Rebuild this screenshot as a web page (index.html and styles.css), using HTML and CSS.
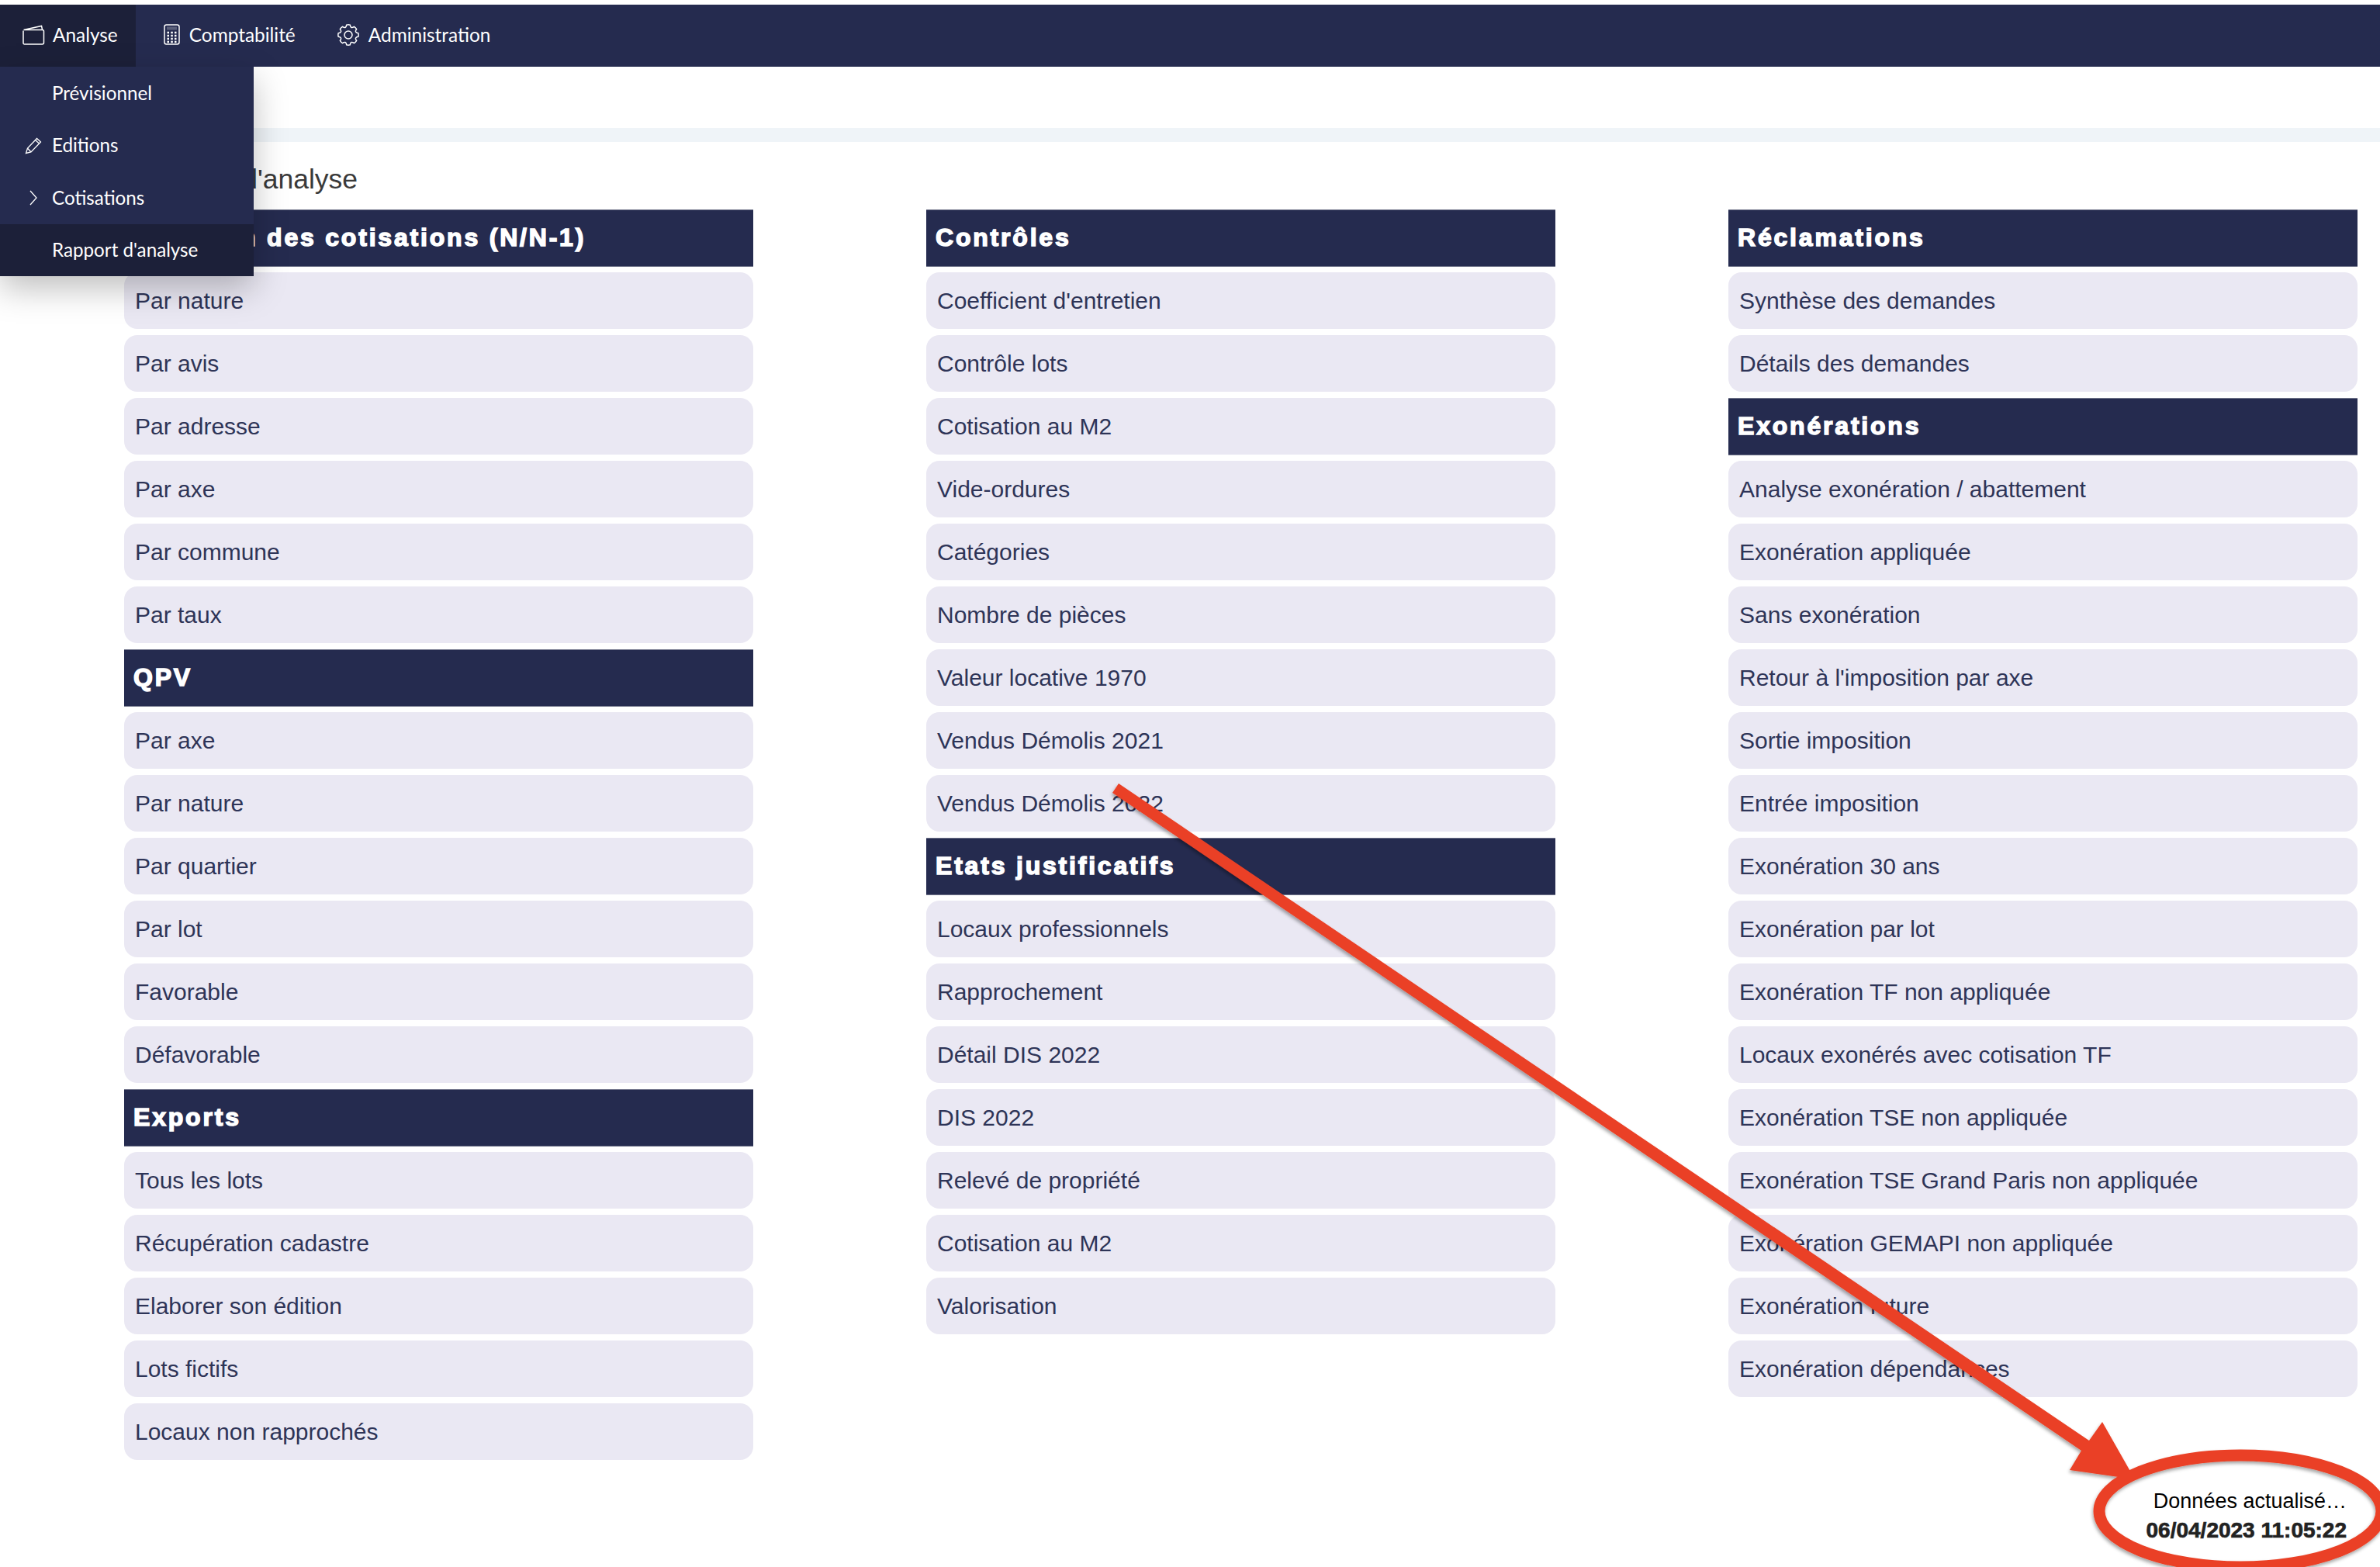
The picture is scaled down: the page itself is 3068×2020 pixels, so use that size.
FILE: index.html
```
<!DOCTYPE html>
<html lang="fr">
<head>
<meta charset="utf-8">
<title>Rapport d'analyse</title>
<link rel="stylesheet" href="styles.css">
</head>
<body>
<nav class="nav">
  <a class="nav-item active">
    <svg class="ico" width="29" height="26" viewBox="0 0 29 26"><path d="M2.500 6.500h23a2 2 0 0 1 2 2v14.500a2 2 0 0 1-2 2h-23a1.500 1.500 0 0 1-1.500-1.500V7.500M1.500 6.500 24.500 1.500l1 4.500"/></svg>
    Analyse
  </a>
  <a class="nav-item">
    <svg class="ico" width="21" height="27" viewBox="0 0 21 27"><rect x="1" y="1" width="19" height="25" rx="2.500"/><rect class="screen" x="4" y="3.500" width="13" height="4"/><path class="dots" d="M4.500 11h2.500M9.300 11h2.500M14 11h2.500M4.500 15h2.500M9.300 15h2.500M14 15h2.500M4.500 19h2.500M9.300 19h2.500M14 19h2.500M4.500 23h2.500M9.300 23h2.500M14 23h2.500"/></svg>
    Comptabilité
  </a>
  <a class="nav-item">
    <svg class="ico" width="28" height="28" viewBox="0 0 28 28"><circle cx="14" cy="14" r="5"/><path d="M26.800 11.740Q27.500 14 26.800 16.260Q21.390 17.060 24.650 21.460Q23.400 23.400 21.460 24.650Q17.060 21.390 16.260 26.800Q14 27.500 11.740 26.800Q10.940 21.390 6.540 24.650Q4.600 23.400 3.350 21.460Q6.610 17.060 1.200 16.260Q.5 14 1.200 11.740Q6.610 10.940 3.350 6.540Q4.600 4.600 6.540 3.350Q10.940 6.610 11.740 1.200Q14 .5 16.260 1.200Q17.060 6.610 21.460 3.350Q23.400 4.600 24.650 6.540Q21.390 10.940 26.800 11.740z"/></svg>
    Administration
  </a>
</nav>
<ul class="dropdown">
  <li class="drop-item">Prévisionnel</li>
  <li class="drop-item">
    <svg class="drop-ico" width="22" height="22" viewBox="0 0 22 22"><path d="M1.500 20.500 3.500 14 15.500 1.500l5 4.500L8 19zM3.500 14 8 19M13.500 3.500l5 4.500"/></svg>
    Editions
  </li>
  <li class="drop-item">
    <svg class="drop-ico" width="22" height="22" viewBox="0 0 22 22"><path d="M7 2l8 9-8 9"/></svg>
    Cotisations
  </li>
  <li class="drop-item current">Rapport d'analyse</li>
</ul>
<div class="subbar"></div>
<div class="band"></div>
<h1 class="title">Rapport d'analyse</h1>
<main class="columns">
  <section class="col">
    <h2 class="head">Variation des cotisations (N/N-1)</h2>
    <a class="row">Par nature</a>
    <a class="row">Par avis</a>
    <a class="row">Par adresse</a>
    <a class="row">Par axe</a>
    <a class="row">Par commune</a>
    <a class="row">Par taux</a>
    <h2 class="head">QPV</h2>
    <a class="row">Par axe</a>
    <a class="row">Par nature</a>
    <a class="row">Par quartier</a>
    <a class="row">Par lot</a>
    <a class="row">Favorable</a>
    <a class="row">Défavorable</a>
    <h2 class="head">Exports</h2>
    <a class="row">Tous les lots</a>
    <a class="row">Récupération cadastre</a>
    <a class="row">Elaborer son édition</a>
    <a class="row">Lots fictifs</a>
    <a class="row">Locaux non rapprochés</a>
  </section>
  <section class="col">
    <h2 class="head">Contrôles</h2>
    <a class="row">Coefficient d'entretien</a>
    <a class="row">Contrôle lots</a>
    <a class="row">Cotisation au M2</a>
    <a class="row">Vide-ordures</a>
    <a class="row">Catégories</a>
    <a class="row">Nombre de pièces</a>
    <a class="row">Valeur locative 1970</a>
    <a class="row">Vendus Démolis 2021</a>
    <a class="row">Vendus Démolis 2022</a>
    <h2 class="head">Etats justificatifs</h2>
    <a class="row">Locaux professionnels</a>
    <a class="row">Rapprochement</a>
    <a class="row">Détail DIS 2022</a>
    <a class="row">DIS 2022</a>
    <a class="row">Relevé de propriété</a>
    <a class="row">Cotisation au M2</a>
    <a class="row">Valorisation</a>
  </section>
  <section class="col">
    <h2 class="head">Réclamations</h2>
    <a class="row">Synthèse des demandes</a>
    <a class="row">Détails des demandes</a>
    <h2 class="head">Exonérations</h2>
    <a class="row">Analyse exonération / abattement</a>
    <a class="row">Exonération appliquée</a>
    <a class="row">Sans exonération</a>
    <a class="row">Retour à l'imposition par axe</a>
    <a class="row">Sortie imposition</a>
    <a class="row">Entrée imposition</a>
    <a class="row">Exonération 30 ans</a>
    <a class="row">Exonération par lot</a>
    <a class="row">Exonération TF non appliquée</a>
    <a class="row">Locaux exonérés avec cotisation TF</a>
    <a class="row">Exonération TSE non appliquée</a>
    <a class="row">Exonération TSE Grand Paris non appliquée</a>
    <a class="row">Exonération GEMAPI non appliquée</a>
    <a class="row">Exonération future</a>
    <a class="row">Exonération dépendances</a>
  </section>
</main>
<footer class="stamp">
  <div class="stamp-label">Données actualisé…</div>
  <div class="stamp-date">06/04/2023 11:05:22</div>
</footer>
<svg class="annotation" width="3068" height="2020" viewBox="0 0 3068 2020">
  <defs>
    <filter id="sh" x="-5%" y="-5%" width="110%" height="110%"><feDropShadow dx="-1" dy="3" stdDeviation="2" flood-color="#000" flood-opacity=".35"/></filter>
  </defs>
  <g filter="url(#sh)">
    <ellipse class="ring" cx="2888" cy="1948" rx="182" ry="72"/>
    <path class="arrow" d="M1442 1010 2693 1857 2710 1833 2752 1907 2668 1895 2683 1870 1434 1022z"/>
  </g>
</svg>
</body>
</html>
```
FILE: styles.css
```
* { box-sizing: border-box; }
html, body { margin: 0; padding: 0; }
body {
  width: 3068px;
  height: 2020px;
  overflow: hidden;
  position: relative;
  background: #fff;
  padding-top: 6px;
  font-family: "Liberation Sans", Arial, sans-serif;
}
.nav {
  height: 80px;
  background: #252b4f;
  display: flex;
  font-family: Lato, sans-serif;
  font-size: 24.400px;
  color: #fff;
}
.nav-item {
  display: flex;
  align-items: center;
  gap: 12px;
  padding: 0 0 3px 54px;
}
.nav-item.active { background: #1c2039; gap: 10px; padding: 0 23px 3px 29px; }
.nav-item.active + .nav-item { padding-left: 36px; }
.ico { fill: none; stroke: #fff; stroke-width: 1.5; flex: none; }
.ico .dots { stroke-width: 2.500; }
.ico .screen { fill: #fff; stroke: none; opacity: .25; }
.dropdown {
  position: absolute;
  left: 0;
  top: 86px;
  z-index: 3;
  width: 327px;
  height: 270px;
  margin: 0;
  padding: 0;
  list-style: none;
  background: #252b4f;
  color: #fff;
  font-family: Lato, sans-serif;
  font-size: 24.200px;
  box-shadow: 0 16px 40px rgba(0, 0, 0, .25);
  display: flex;
  flex-direction: column;
}
.drop-item {
  flex: 1;
  display: flex;
  align-items: center;
  padding: 0 0 1px 67px;
  position: relative;
}
.drop-item.current { background: #1c2039; }
.drop-ico {
  position: absolute;
  left: 32px;
  top: 23px;
  fill: none;
  stroke: #fff;
  stroke-width: 1.3;
}
.subbar { height: 79px; }
.band { height: 18px; background: #eff4f8; }
.title {
  margin: 0;
  height: 87px;
  padding: 27px 0 0 176px;
  font-size: 35.500px;
  line-height: 42px;
  font-weight: 400;
  color: #3a3a3a;
}
.columns {
  display: grid;
  grid-template-columns: repeat(3, 811px);
  column-gap: 223px;
  padding-left: 160px;
  height: 1620px;
}
.col { display: flex; flex-direction: column; }
.head {
  margin: 0 0 7px;
  height: 74px;
  display: flex;
  align-items: center;
  padding: 0 0 1px 12px;
  background: #252b4f;
  border-top: 1px solid #6f7389;
  border-bottom: 1px solid #6f7389;
  color: #fff;
  font-size: 32px;
  font-weight: 700;
  letter-spacing: 2.800px;
  -webkit-text-stroke: 1.500px #fff;
  white-space: nowrap;
  overflow: hidden;
}
.row {
  height: 73px;
  margin-bottom: 8px;
  display: flex;
  align-items: center;
  padding: 0 0 0 14px;
  background: #eae8f3;
  border-radius: 17px;
  color: #2e3457;
  font-size: 30px;
}
.stamp {
  position: absolute;
  right: 43px;
  top: 1916px;
  text-align: right;
  font-size: 28px;
  line-height: 38px;
  color: #000;
}
.stamp-label { font-size: 27px; }
.stamp-date { font-weight: 700; color: #222; -webkit-text-stroke: .7px #222; }
.annotation { position: absolute; left: 0; top: 0; z-index: 5; pointer-events: none; }
.ring { fill: none; stroke: #ea4126; stroke-width: 15; }
.arrow { fill: #ea4126; }
```
